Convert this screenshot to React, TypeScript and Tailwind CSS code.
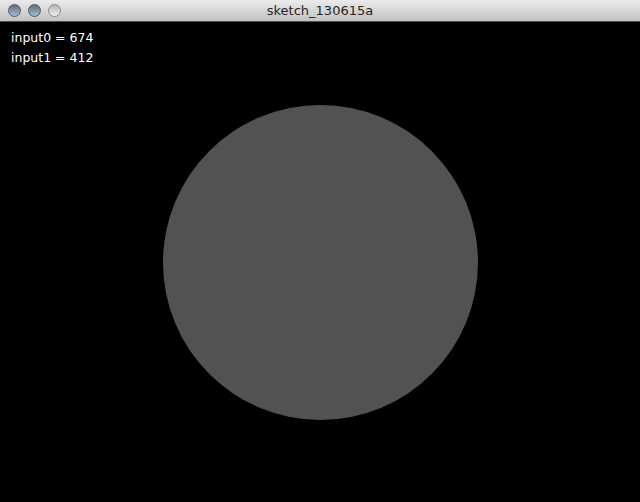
export default function App() {
  return (
    <div className="w-[640px] h-[502px] bg-black overflow-hidden flex flex-col font-['DejaVu_Sans',sans-serif]">
      {/* title bar */}
      <div className="relative h-[22px] shrink-0 bg-gradient-to-b from-[#ebebeb] to-[#c2c2c2] border-b border-[#505050] flex items-center">
        <div className="flex gap-[7px] pl-[8px]">
          <span className="w-[13px] h-[13px] rounded-full bg-gradient-to-b from-[#5d6f80] to-[#a9bccb] border border-[#4e5b66]" />
          <span className="w-[13px] h-[13px] rounded-full bg-gradient-to-b from-[#5d6f80] to-[#a9bccb] border border-[#4e5b66]" />
          <span className="w-[13px] h-[13px] rounded-full bg-gradient-to-b from-[#b4b4b4] to-[#f0f0f0] border border-[#8a8a8a]" />
        </div>
        <span className="absolute inset-x-0 text-center text-[13px] text-[#262626] leading-none">sketch_130615a</span>
      </div>

      {/* canvas */}
      <div className="relative flex-1 flex items-center justify-center">
        <div className="absolute left-[11px] top-[6px] text-white text-[12.5px] leading-[20px]">
          <div>input0 = 674</div>
          <div>input1 = 412</div>
        </div>
        <div className="w-[315px] h-[315px] rounded-full bg-[#525252]" />
      </div>
    </div>
  );
}
